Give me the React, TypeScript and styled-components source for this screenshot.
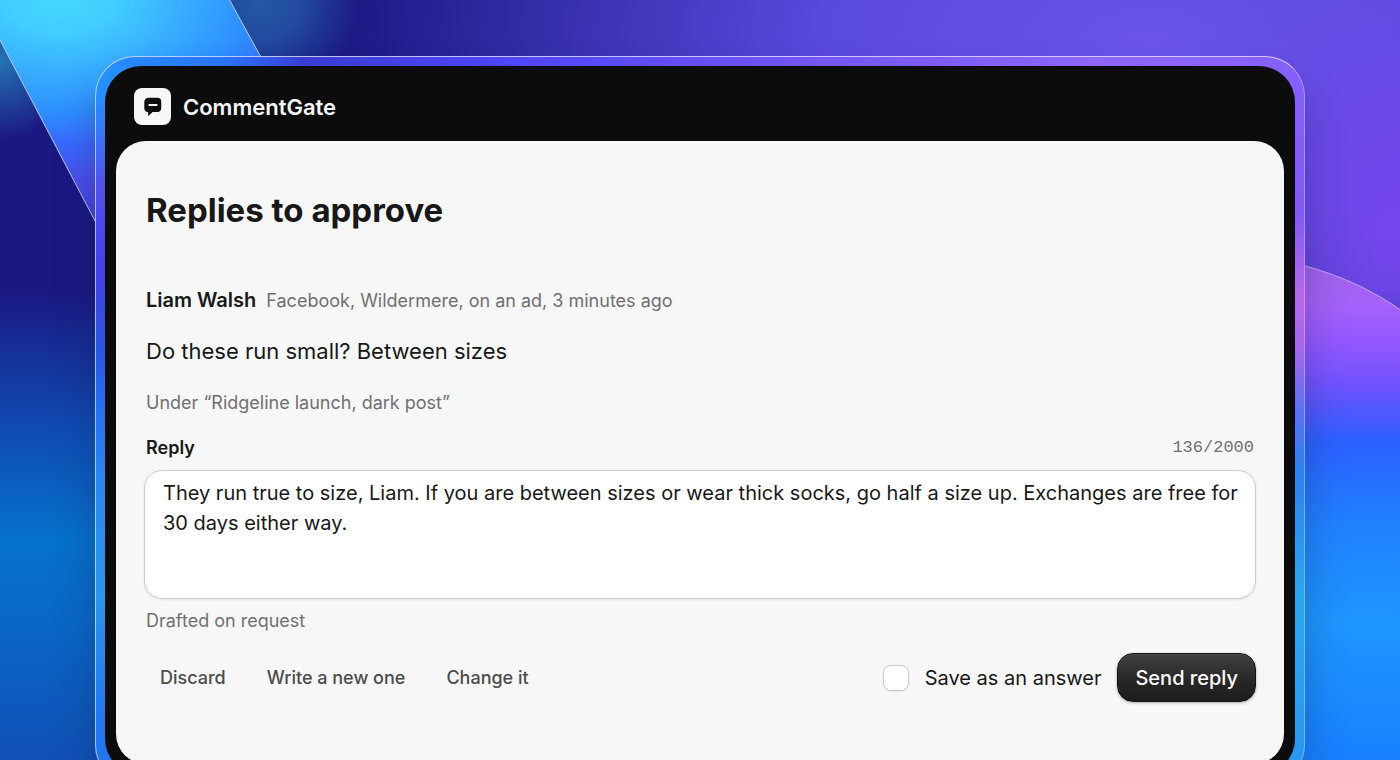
import React, { useState } from "react";
import styled, { createGlobalStyle } from "styled-components";

const GlobalStyle = createGlobalStyle`
  *, *::before, *::after { box-sizing: border-box; }
  html, body, #root { height: 100%; }
  body { margin: 0; overflow: hidden; background: #1b1680; }
  button, input, textarea { font: inherit; color: inherit; }
`;

const Stage = styled.main`
  position: relative;
  min-height: 100%;
  padding: 56px 95px 0;
  overflow: hidden;
  color: #181818;
  font-family: Inter, "Liberation Sans", sans-serif;
  background:
    radial-gradient(circle at 260px 0, #2458a6 0, rgba(36, 88, 166, 0.8) 40px, rgba(36, 88, 166, 0) 100px),
    radial-gradient(circle at 0 60px, #2474b4 0, rgba(36, 116, 180, 0) 80px),
    linear-gradient(rgba(27, 24, 130, 0) 290px, #1048b0 420px, #0672cc 540px, #0a66c6 630px, #1050b6 760px),
    radial-gradient(ellipse 200px 260px at 100% 230px, #7746ee 0, rgba(119, 70, 238, 0) 100%),
    radial-gradient(ellipse 820px 480px at 1150px 50px, #6a54ea 0, #5a49de 40%, rgba(27, 24, 130, 0) 100%),
    #1b1882;
`;

const Backdrop = styled.svg`
  position: fixed;
  inset: 0;
  width: 100%;
  height: 100%;
`;

const Bezel = styled.div`
  position: relative;
  padding: 9px;
  border: 1px solid;
  border-color: rgba(235, 235, 255, 0.75) rgba(225, 225, 255, 0.4) transparent rgba(225, 235, 255, 0.7);
  border-radius: 40px;
  background:
    linear-gradient(90deg, #258fff 0, #2a74ff 130px, #3a3cd0 210px, #5046ff 420px, #7556f8 740px, #8c66ff 1000px, #8560ff 100%) top / 100% 10px,
    linear-gradient(#258fff 40px, #5050f0 130px, #4440e8 215px, #2a55e0 290px, #2470f0 350px, #2a88f0 430px, #2a95ea 540px, #2277f0 660px) left / 50% 100%,
    linear-gradient(#8560ff 20px, #8558f8 160px, #b868ee 240px, #a864ee 290px, #6070f5 350px, #2a80f2 410px, #28a8f0 540px, #2898f0 700px) right / 50% 100%;
  background-repeat: no-repeat;
  background-origin: border-box;
  box-shadow: 0 28px 40px rgba(20, 30, 60, 0.3);
`;

const Device = styled.div`
  padding: 0 11px 11px;
  border-radius: 36px;
  background: #0c0c0c;
`;

const Header = styled.header`
  display: flex;
  align-items: center;
  gap: 12px;
  height: 75px;
  padding: 6px 18px 0;
  color: #f7f7f7;
  font-size: 22px;
  font-weight: 600;
`;

const Panel = styled.section`
  padding: 48px 30px 62px;
  border-radius: 30px;
  background: #f7f7f7;
`;

const Title = styled.h1`
  margin: 0 0 54px;
  font-size: 33px;
  line-height: 42px;
  font-weight: 700;
`;

const Byline = styled.div`
  display: flex;
  align-items: baseline;
  gap: 10px;
  line-height: 30px;
`;

const Author = styled.strong`
  font-size: 20px;
  font-weight: 600;
`;

const Muted = styled.p`
  margin: 0;
  color: #707070;
  font-size: 18px;
  line-height: 28px;
`;

const Comment = styled.p`
  margin: 19px 0 21px;
  font-size: 22px;
  line-height: 34px;
`;

const FieldHead = styled.div`
  display: flex;
  justify-content: space-between;
  align-items: center;
  margin-top: 17px;
  line-height: 28px;
`;

const FieldLabel = styled.label`
  font-size: 18px;
  font-weight: 600;
`;

const Counter = styled.span`
  color: #707070;
  font-family: "Liberation Mono", monospace;
  font-size: 17px;
`;

const ReplyBox = styled.textarea`
  display: block;
  width: calc(100% + 4px);
  height: 129px;
  margin: 8px -2px;
  padding: 7px 12px 7px 18px;
  border: 1px solid #cccccc;
  border-radius: 18px;
  outline: 0;
  resize: none;
  background: #ffffff;
  box-shadow: 0 1px 3px rgba(0, 0, 0, 0.08);
  font-size: 20px;
  line-height: 30px;
`;

const Actions = styled.div`
  display: flex;
  align-items: center;
  margin: 18px -2px 0 0;
`;

const TextButton = styled.button`
  margin-right: 13px;
  padding: 8px 14px;
  border: 0;
  background: none;
  color: #4c4c4c;
  font-size: 18px;
  line-height: 32px;
  font-weight: 500;
`;

const SaveOption = styled.label`
  display: flex;
  align-items: center;
  gap: 16px;
  margin: 0 16px 0 auto;
  font-size: 20px;
`;

const Checkbox = styled.input`
  appearance: none;
  width: 26px;
  height: 26px;
  margin: 0;
  border: 1px solid #cccccc;
  border-radius: 8px;
  background: #ffffff;
  box-shadow: 0 1px 2px rgba(0, 0, 0, 0.08);
  &:checked { background: #222222; }
`;

const SendButton = styled.button`
  height: 49px;
  padding: 0 17px;
  border: 1px solid #111111;
  border-radius: 16px;
  background: linear-gradient(#404040, #262626 60%, #1d1d1d);
  box-shadow: inset 0 1px 0 #4c4c4c, 0 1px 3px rgba(0, 0, 0, 0.3);
  color: #ffffff;
  font-size: 20px;
  font-weight: 500;
`;

function Logo() {
  return (
    <svg width="37" height="37" viewBox="0 0 37 37" aria-hidden="true">
      <rect width="37" height="37" rx="8" fill="#f7f7f7" />
      <path d="M14.2 9.8h9a4 4 0 0 1 4 4V20a4 4 0 0 1-4 4h-4.6l-3.8 3.6q-.7.4-.7-.4V24a4 4 0 0 1-3.8-4v-6.2a4 4 0 0 1 4.1-4Z" fill="#0c0c0c" />
      <path d="M14.6 17h8.8" stroke="#f7f7f7" strokeWidth="2" />
    </svg>
  );
}

export default function App() {
  const [reply, setReply] = useState(
    "They run true to size, Liam. If you are between sizes or wear thick socks, go half a size up. Exchanges are free for 30 days either way."
  );
  return (
    <>
      <GlobalStyle />
      <Stage>
        <Backdrop viewBox="0 0 1400 760" preserveAspectRatio="none" aria-hidden="true">
          <defs>
            <radialGradient id="beam" gradientUnits="userSpaceOnUse" cx="0" cy="0" r="220" gradientTransform="translate(60 0) scale(1.7 1)">
              <stop offset="0" stopColor="#46d8ff" />
              <stop offset="0.15" stopColor="#42ccff" />
              <stop offset="0.5" stopColor="#2e90ff" />
              <stop offset="0.66" stopColor="#3a68ff" />
              <stop offset="0.82" stopColor="#4c4fee" />
              <stop offset="1" stopColor="#4640dc" />
            </radialGradient>
            <linearGradient id="orb" x1="0" y1="0" x2="0" y2="1">
              <stop offset="0" stopColor="#9f62e8" />
              <stop offset="0.09" stopColor="#a561fa" />
              <stop offset="0.16" stopColor="#9458ff" />
              <stop offset="0.25" stopColor="#7052ff" />
              <stop offset="0.36" stopColor="#2c60ff" />
              <stop offset="0.52" stopColor="#2080ff" />
              <stop offset="0.72" stopColor="#1e96ff" />
              <stop offset="1" stopColor="#1880ff" />
            </linearGradient>
          </defs>
          <path d="M-2 36 0 40 115 259 280 92 229-1V-2H-2Z" fill="url(#beam)" stroke="#b8cdff" />
          <path d="M1280 260Q1350 274 1402 311V762H1280Z" fill="url(#orb)" stroke="#c9a8ff" />
        </Backdrop>
        <Bezel>
          <Device>
            <Header>
              <Logo />
              CommentGate
            </Header>
            <Panel>
              <Title>Replies to approve</Title>
              <Byline>
                <Author>Liam Walsh</Author>
                <Muted>Facebook, Wildermere, on an ad, 3 minutes ago</Muted>
              </Byline>
              <Comment>Do these run small? Between sizes</Comment>
              <Muted>Under “Ridgeline launch, dark post”</Muted>
              <FieldHead>
                <FieldLabel htmlFor="reply">Reply</FieldLabel>
                <Counter>{reply.length}/2000</Counter>
              </FieldHead>
              <ReplyBox id="reply" value={reply} onChange={(e) => setReply(e.target.value)} />
              <Muted>Drafted on request</Muted>
              <Actions>
                <TextButton type="button">Discard</TextButton>
                <TextButton type="button">Write a new one</TextButton>
                <TextButton type="button">Change it</TextButton>
                <SaveOption>
                  <Checkbox type="checkbox" />
                  Save as an answer
                </SaveOption>
                <SendButton type="button">Send reply</SendButton>
              </Actions>
            </Panel>
          </Device>
        </Bezel>
      </Stage>
    </>
  );
}
